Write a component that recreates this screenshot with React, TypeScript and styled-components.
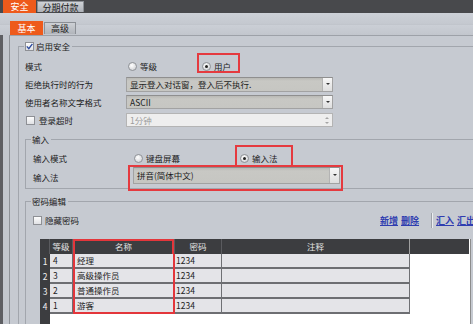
import React from "react";
import styled, { createGlobalStyle } from "styled-components";

const GlobalStyle = createGlobalStyle`
  html, body { margin: 0; padding: 0; overflow: hidden; background: #c6cad1; }
  body {
    font-family: "Noto Sans CJK SC", "Noto Sans", sans-serif;
    font-size: 8.5px;
    color: #1c1c1c;
  }
  * { box-sizing: border-box; }
`;

const Screen = styled.div`
  width: 473px;
  height: 324px;
  overflow: hidden;
  display: flex;
  flex-direction: column;
`;

const TopBar = styled.div`
  height: 13px;
  flex: none;
  background: #48494c;
  display: flex;
  align-items: flex-start;
  gap: 1px;
  padding-left: 3px;
`;

const TopTab = styled.div<{ $active?: boolean; $w: number }>`
  width: ${(p) => p.$w}px;
  height: ${(p) => (p.$active ? 13 : 11)}px;
  margin-top: ${(p) => (p.$active ? 0 : 1)}px;
  display: flex;
  align-items: center;
  justify-content: center;
  font-size: 9px;
  line-height: 1;
  color: ${(p) => (p.$active ? "#ffffff" : "#222")};
  background: ${(p) =>
    p.$active ? "#ee5a1b" : "linear-gradient(#cfd2d6, #aeb2b8)"};
  border: ${(p) => (p.$active ? "none" : "1px solid #8b8f95")};
  border-bottom: none;
`;

const SubTabBar = styled.div`
  height: 22px;
  flex: none;
  display: flex;
  align-items: flex-end;
  gap: 1px;
  padding-left: 10px;
  background: linear-gradient(
    #cdd1d8 0,
    #c4c8cf 11px,
    #b7bbc2 11px,
    #cbcfd6 12px,
    #c2c6cd 22px
  );
`;

const SubTab = styled.div<{ $active?: boolean; $w: number }>`
  width: ${(p) => p.$w}px;
  height: ${(p) => (p.$active ? 14 : 12)}px;
  margin-bottom: ${(p) => (p.$active ? 0 : 1)}px;
  display: flex;
  align-items: center;
  justify-content: center;
  font-size: 9px;
  line-height: 1;
  color: ${(p) => (p.$active ? "#fff" : "#222")};
  background: ${(p) =>
    p.$active ? "#ee5a1b" : "linear-gradient(#cdd0d5, #b1b5bb)"};
  border: ${(p) => (p.$active ? "none" : "1px solid #8b8f95")};
  border-bottom: none;
`;

const Body = styled.div`
  flex: 1;
  display: flex;
  border-left: 3px solid #5e5f63;
  padding-left: 6px;
  background: #c3c7ce;
`;

const Panel = styled.div`
  width: 560px;
  flex: none;
  border-left: 1px solid #8e9298;
  border-top: 1px solid #9da1a8;
  padding: 4px 0 0 8px;
  background: #c6cad1;
`;

const Field = styled.fieldset<{ $pad: string; $mt?: number }>`
  margin: ${(p) => p.$mt ?? 0}px 0 0 0;
  padding: ${(p) => p.$pad};
  border: 1px solid #a2a6ad;
  min-width: 0;
`;

const Legend = styled.legend<{ $ml: number }>`
  padding: 0 2px 0 1px;
  margin-left: ${(p) => p.$ml}px;
  background: #c6cad1;
`;

const LegendInner = styled.span`
  display: inline-flex;
  align-items: center;
  gap: 2px;
  height: 11px;
  line-height: 1;
  white-space: nowrap;
`;

const Rows = styled.div<{ $pt: number }>`
  padding-top: ${(p) => p.$pt}px;
`;

const FormRow = styled.div<{ $h: number }>`
  display: flex;
  align-items: center;
  height: ${(p) => p.$h}px;
  line-height: 1;
`;

const Label = styled.div<{ $w: number }>`
  width: ${(p) => p.$w}px;
  flex: none;
  white-space: nowrap;
`;

const CheckLabel = styled.label<{ $gap: number; $ml?: number }>`
  display: flex;
  align-items: center;
  gap: ${(p) => p.$gap}px;
  margin-left: ${(p) => p.$ml ?? 0}px;
  white-space: nowrap;
`;

const Box = styled.span`
  width: 9px;
  height: 9px;
  flex: none;
  border: 1px solid #8e9095;
  background: linear-gradient(#fdfdfd, #e0e1e4);
  display: flex;
  align-items: center;
  justify-content: center;
`;

const RadioDot = styled.span<{ $on?: boolean }>`
  width: 9px;
  height: 9px;
  flex: none;
  border-radius: 50%;
  border: 1px solid #8f9297;
  background: radial-gradient(circle at 40% 35%, #ffffff, #d6d7da 75%);
  display: flex;
  align-items: center;
  justify-content: center;
  &::after {
    content: "";
    width: 3px;
    height: 3px;
    border-radius: 50%;
    background: #222;
    display: ${(p) => (p.$on ? "block" : "none")};
  }
`;

const Option = styled.label<{ $w?: number; $ml?: number }>`
  display: flex;
  align-items: center;
  gap: 3px;
  flex: none;
  width: ${(p) => (p.$w ? `${p.$w}px` : "auto")};
  margin-left: ${(p) => p.$ml ?? 0}px;
  white-space: nowrap;
`;

const RedBox = styled.div<{
  $w: number;
  $h: number;
  $mt?: number;
  $ml?: number;
  $pad: string;
}>`
  flex: none;
  display: flex;
  align-items: center;
  width: ${(p) => p.$w}px;
  height: ${(p) => p.$h}px;
  margin-top: ${(p) => p.$mt ?? 0}px;
  margin-left: ${(p) => p.$ml ?? 0}px;
  padding: ${(p) => p.$pad};
  border: 2px solid #e53a3f;
`;

const Select = styled.div<{ $h: number }>`
  width: 207px;
  height: ${(p) => p.$h}px;
  flex: none;
  display: flex;
  align-items: stretch;
  background: linear-gradient(#b9b9b5, #c8c8c4 3px, #c6c6c2);
  border: 1px solid #a2a2a2;
  border-top-color: #8f8f8f;
`;

const SelectText = styled.div`
  flex: 1;
  display: flex;
  align-items: center;
  padding-left: 3px;
  white-space: nowrap;
  overflow: hidden;
`;

const SelectBtn = styled.div`
  width: 10px;
  flex: none;
  background: linear-gradient(#f7f7f7, #dedede);
  border-left: 1px solid #b3b3b3;
  display: flex;
  align-items: center;
  justify-content: center;
`;

const Caret = styled.span<{ $up?: boolean; $c?: string }>`
  width: 0;
  height: 0;
  border-left: 2px solid transparent;
  border-right: 2px solid transparent;
  ${(p) =>
    p.$up
      ? `border-bottom: 2px solid ${p.$c ?? "#333"};`
      : `border-top: 2px solid ${p.$c ?? "#333"};`}
`;

const Spinner = styled.div`
  width: 207px;
  height: 14px;
  flex: none;
  display: flex;
  align-items: center;
  background: #eeeeee;
  border: 1px solid #b4b4b4;
  color: #9c9c9c;
  padding-left: 3px;
`;

const SpinText = styled.div`
  flex: 1;
`;

const SpinArrows = styled.div`
  width: 10px;
  display: flex;
  flex-direction: column;
  align-items: center;
  gap: 3px;
`;

const ToolRow = styled.div`
  display: grid;
  grid-template-columns: 347px auto;
  align-items: center;
  height: 18px;
  line-height: 1;
`;

const Links = styled.div`
  display: flex;
  align-items: center;
`;

const Link = styled.a<{ $ml?: number }>`
  margin-left: ${(p) => p.$ml ?? 0}px;
  color: #2f3db0;
  text-decoration: underline;
  font-size: 9px;
  font-weight: 700;
  white-space: nowrap;
`;

const VSep = styled.span`
  width: 1px;
  height: 15px;
  background: #9ea2a9;
  box-shadow: 1px 0 0 #eceef1;
  margin: 0 4px 0 12px;
`;

const COLS = "10px 23px 102px 47px 188px 59px";
const RED = "#e3363b";

const Table = styled.div`
  margin: 10px 0 0 7px;
  width: 431px;
  height: 110px;
  background: linear-gradient(to right, #3c3d40 10px, #ffffff 10px);
  border-right: 1px solid #8c8c8c;
  line-height: 1;
`;

const TRow = styled.div`
  display: grid;
  grid-template-columns: ${COLS};
  height: 15px;
`;

type RedPos = "top" | "mid" | "bottom";

const redShadow = (r?: RedPos) => {
  if (!r) return "none";
  const sides = `inset 2px 0 0 ${RED}, inset -2px 0 0 ${RED}`;
  if (r === "top") return `${sides}, inset 0 2px 0 ${RED}`;
  if (r === "bottom") return `${sides}, inset 0 -2px 0 ${RED}`;
  return sides;
};

const HeadCell = styled.div<{ $red?: RedPos; $light?: boolean; $last?: boolean }>`
  background: #3c3d40;
  color: #e2e2e2;
  display: flex;
  align-items: center;
  justify-content: center;
  border-right: ${(p) =>
    p.$last ? "none" : `1px solid ${p.$light ? "#a0a0a0" : "#5a5b5f"}`};
  box-shadow: ${(p) => redShadow(p.$red)};
`;

const NumCell = styled.div`
  color: #f0f0f0;
  display: flex;
  align-items: center;
  justify-content: center;
`;

const DataCell = styled.div<{ $red?: RedPos; $pl: number }>`
  background: linear-gradient(#e4e4e8 0, #e4e4e8 13px, #6d6e72 13px);
  border-right: ${(p) => (p.$red ? "none" : "1px solid #6f7074")};
  box-shadow: ${(p) => redShadow(p.$red)};
  display: flex;
  align-items: center;
  padding: 0 0 2px ${(p) => p.$pl}px;
  white-space: nowrap;
`;

const BlankCell = styled.div``;

const Check = () => (
  <svg width="7" height="7" viewBox="0 0 7 7">
    <polyline
      points="0.8,3.4 2.8,5.6 6.4,0.9"
      fill="none"
      stroke="#2b4a9e"
      strokeWidth="1.4"
    />
  </svg>
);

const Dropdown = ({ text, h }: { text: string; h: number }) => (
  <Select $h={h}>
    <SelectText>{text}</SelectText>
    <SelectBtn>
      <Caret />
    </SelectBtn>
  </Select>
);

const users = [
  { n: "1", lv: "4", name: "经理", pw: "1234" },
  { n: "2", lv: "3", name: "高级操作员", pw: "1234" },
  { n: "3", lv: "2", name: "普通操作员", pw: "1234" },
  { n: "4", lv: "1", name: "游客", pw: "1234" },
];

export default function App() {
  return (
    <Screen>
      <GlobalStyle />
      <TopBar>
        <TopTab $active $w={33}>安全</TopTab>
        <TopTab $w={47}>分期付款</TopTab>
      </TopBar>
      <SubTabBar>
        <SubTab $active $w={33}>基本</SubTab>
        <SubTab $w={32}>高级</SubTab>
      </SubTabBar>
      <Body>
        <Panel>
          <Field $pad="0 0 20px 6px">
            <Legend $ml={-1}>
              <LegendInner>
                <Box>
                  <Check />
                </Box>
                启用安全
              </LegendInner>
            </Legend>
            <Rows $pt={5}>
              <FormRow $h={18}>
                <Label $w={101}>模式</Label>
                <Option $w={69} $ml={2}>
                  <RadioDot />
                  等级
                </Option>
                <RedBox $w={43} $h={20} $mt={-6} $pad="6px 0 0 3px">
                  <Option>
                    <RadioDot $on />
                    用户
                  </Option>
                </RedBox>
              </FormRow>
              <FormRow $h={18}>
                <Label $w={101}>拒绝执行时的行为</Label>
                <Dropdown h={15} text="显示登入对话窗，登入后不执行." />
              </FormRow>
              <FormRow $h={18}>
                <Label $w={101}>使用者名称文字格式</Label>
                <Dropdown h={14} text="ASCII" />
              </FormRow>
              <FormRow $h={18}>
                <Label $w={101}>
                  <CheckLabel $gap={4} $ml={1}>
                    <Box />
                    登录超时
                  </CheckLabel>
                </Label>
                <Spinner>
                  <SpinText>1分钟</SpinText>
                  <SpinArrows>
                    <Caret $up $c="#a5a5a5" />
                    <Caret $c="#a5a5a5" />
                  </SpinArrows>
                </Spinner>
              </FormRow>
            </Rows>

            <Field $pad="4px 0 1px 7px" $mt={4}>
              <Legend $ml={-2}>
                <LegendInner>输入</LegendInner>
              </Legend>
              <FormRow $h={19}>
                <Label $w={100}>输入模式</Label>
                <Option $w={101} $ml={1}>
                  <RadioDot />
                  键盘屏幕
                </Option>
                <RedBox $w={58} $h={22} $mt={-5} $pad="4px 0 0 3px">
                  <Option>
                    <RadioDot $on />
                    输入法
                  </Option>
                </RedBox>
              </FormRow>
              <FormRow $h={19}>
                <Label $w={100}>输入法</Label>
                <RedBox $w={215} $h={26} $ml={-5} $pad="0 1px 5px 3px">
                  <Dropdown h={17} text="拼音(简体中文)" />
                </RedBox>
              </FormRow>
            </Field>

            <Field $pad="4px 0 0 7px" $mt={6}>
              <Legend $ml={-2}>
                <LegendInner>密码编辑</LegendInner>
              </Legend>
              <ToolRow>
                <CheckLabel $gap={3}>
                  <Box />
                  隐藏密码
                </CheckLabel>
                <Links>
                  <Link>新增</Link>
                  <Link $ml={3}>删除</Link>
                  <VSep />
                  <Link>汇入</Link>
                  <Link $ml={3}>汇出</Link>
                </Links>
              </ToolRow>
              <Table>
                <TRow>
                  <HeadCell />
                  <HeadCell>等级</HeadCell>
                  <HeadCell $red="top">名称</HeadCell>
                  <HeadCell>密码</HeadCell>
                  <HeadCell $light>注释</HeadCell>
                  <HeadCell $last />
                </TRow>
                {users.map((u, i) => (
                  <TRow key={u.n}>
                    <NumCell>{u.n}</NumCell>
                    <DataCell $pl={3}>{u.lv}</DataCell>
                    <DataCell
                      $pl={4}
                      $red={i === users.length - 1 ? "bottom" : "mid"}
                    >
                      {u.name}
                    </DataCell>
                    <DataCell $pl={1}>{u.pw}</DataCell>
                    <DataCell $pl={2} />
                    <BlankCell />
                  </TRow>
                ))}
              </Table>
            </Field>
          </Field>
        </Panel>
      </Body>
    </Screen>
  );
}
